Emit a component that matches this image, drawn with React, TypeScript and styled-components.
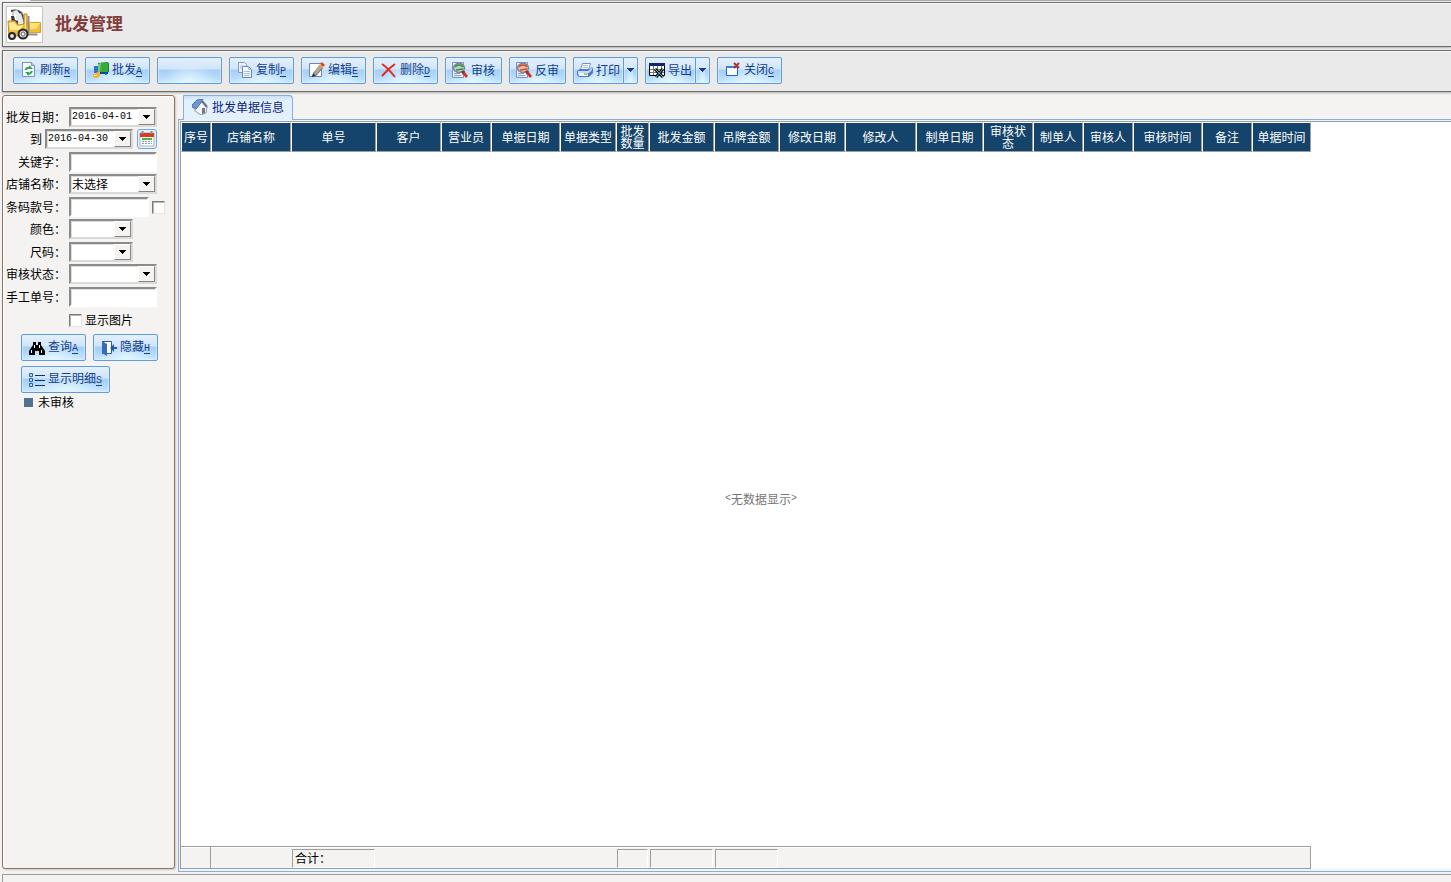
import React from 'react';
import styled, { createGlobalStyle, css } from 'styled-components';

const Global = createGlobalStyle`
  * { box-sizing: border-box; }
  body {
    margin: 0;
    background: #f4f3f1;
    color: #000;
    font: 12px/14px "Noto Sans CJK SC", sans-serif;
  }
  button, input, select { font: inherit; color: inherit; margin: 0; padding: 0; }
`;

const mono = '"Liberation Mono", monospace';

const Page = styled.div`
  display: flex;
  position: relative;
  flex-direction: column;
  min-height: 100vh;
  padding: 2px 0 0 2px;
  overflow: hidden;
  &::before {
    content: "";
    position: absolute;
    top: 0;
    left: 30px;
    right: 0;
    height: 1px;
    background: #a9a9a9;
  }
`;

const bar = css`
  border: 1px solid #6c6c6c;
  border-right: 0;
  background: #eaeaea;
  box-shadow: inset 1px 1px 0 #f8f8f8, 0 1px 2px #aaa;
`;

const Header = styled.header`
  ${bar}
  display: flex;
  align-items: center;
  gap: 12px;
  height: 45px;
  padding: 0 3px;
`;

const Logo = styled.span`
  display: flex;
  width: 37px;
  height: 37px;
  border: 1px solid #cdc3b8;
  background: #fff;
`;

const Title = styled.h1`
  margin: 0;
  padding-bottom: 3px;
  font: 700 17px/20px "Noto Sans CJK SC", sans-serif;
  color: #813c3b;
`;

const Toolbar = styled.nav`
  ${bar}
  display: flex;
  align-items: center;
  gap: 7px;
  height: 42px;
  margin-top: 3px;
  padding: 0 10px 2px;
`;

const face = css`
  background:
    radial-gradient(ellipse at 50% 100%, rgba(232, 250, 255, 0.9), rgba(232, 250, 255, 0) 60%),
    linear-gradient(#e4f1fe, #d0e4fa 42%, #a9cef6 50%, #b3d8fb 75%, #cdeaff);
  color: #123f8e;
  white-space: nowrap;
`;

const Button = styled.button<{ $w: number }>`
  ${face}
  display: flex;
  flex: none;
  align-items: center;
  justify-content: center;
  gap: 3px;
  width: ${(p) => p.$w}px;
  height: 27px;
  border: 1px solid #5f9be0;
  border-radius: 2px;
  box-shadow: inset 0 0 0 1px rgba(225, 242, 255, 0.6);
  u { font: 10px/14px ${mono}; text-underline-offset: 2px; }
`;

const Split = styled.div`
  display: flex;
  flex: none;
  ${Button}:first-child { border-right: 0; border-radius: 2px 0 0 2px; }
  ${Button}:last-child { border-radius: 0 2px 2px 0; }
`;

const Work = styled.main`
  display: flex;
  flex: 1;
  margin-top: 3px;
`;

const Sidebar = styled.aside`
  flex: none;
  width: 173px;
  margin-bottom: 3px;
  padding: 11px 3px 0;
  border: 1px solid #8f7565;
  border-radius: 3px;
  background: #f4f3f1;
  box-shadow: inset 1px 1px 0 #fff, 1px 1px 2px #cfc8bd;
`;

const Field = styled.div`
  display: flex;
  align-items: center;
  gap: 3px;
  height: 20px;
  margin-bottom: 2px;
  &:nth-child(even) { margin-bottom: 3px; }
`;

const Label = styled.label<{ $w?: number }>`
  flex: none;
  width: ${(p) => p.$w ?? 60}px;
  text-align: right;
  white-space: nowrap;
`;

const sunken = css`
  border: 2px solid;
  border-color: #8b8b8b #fff #fff #8b8b8b;
  background: #fff;
  box-shadow: inset 1px 1px 0 #ddd;
`;

const TextBox = styled.input<{ $w: number }>`
  ${sunken}
  width: ${(p) => p.$w}px;
  height: 20px;
  border-radius: 0;
  outline: 0;
`;

const Combo = styled.span<{ $w: number }>`
  ${sunken}
  display: flex;
  position: relative;
  flex: none;
  width: ${(p) => p.$w}px;
  height: 20px;
  border-right-color: #dcdad6;
  border-bottom-color: #dcdad6;
`;

const Select = styled.select<{ $mono?: boolean }>`
  appearance: none;
  width: 100%;
  padding-left: 1px;
  border: 0;
  outline: 0;
  background: transparent;
  ${(p) => p.$mono && css`font: 10px/14px ${mono};`}
`;

const Drop = styled.span`
  display: flex;
  position: absolute;
  top: 0;
  right: 0;
  bottom: 0;
  align-items: center;
  justify-content: center;
  width: 17px;
  border: 1px solid;
  border-color: #fff #858585 #858585 #fff;
  background: #f4f3f1;
  pointer-events: none;
`;

const Tick = styled.input`
  appearance: none;
  flex: none;
  width: 13px;
  height: 13px;
  border: 1px solid;
  border-color: #7c7c7c #e6e4e0 #e6e4e0 #7c7c7c;
  background: #fff;
  box-shadow: inset 1px 1px 0 #b5b5b5;
`;

const PhotoRow = styled.div`
  display: flex;
  align-items: center;
  gap: 3px;
  height: 22px;
  padding-left: 63px;
`;

const CalendarButton = styled.button`
  display: flex;
  width: 20px;
  height: 20px;
  margin-left: 1px;
  border: 1px solid #6fa8e4;
  border-radius: 3px;
  background: #e3f0fd;
`;

const Actions = styled.div`
  display: flex;
  flex-wrap: wrap;
  gap: 5px 7px;
  padding: 3px 0 0 15px;
`;

const Legend = styled.div`
  display: flex;
  align-items: center;
  gap: 5px;
  height: 18px;
  padding-left: 18px;
  &::before { content: ""; width: 9px; height: 9px; background: #50718f; }
`;

const Content = styled.section`
  display: flex;
  flex: 1;
  flex-direction: column;
  min-width: 0;
  padding-left: 3px;
`;

const Tabs = styled.div`
  display: flex;
  padding-left: 5px;
`;

const Tab = styled.button`
  display: flex;
  position: relative;
  align-items: center;
  gap: 4px;
  width: 110px;
  height: 25px;
  margin-bottom: -1px;
  padding: 0 0 3px 8px;
  border: 1px solid #86aee2;
  border-bottom: 0;
  border-radius: 1px 4px 0 0;
  background: linear-gradient(#c9e0fb, #e3f0fd 5px);
  color: #0b1f83;
  white-space: nowrap;
`;

const Frame = styled.div`
  display: flex;
  flex: 1;
  padding: 1px 0 2px 1px;
  border: 1px solid #86aee2;
  border-right: 0;
  background: #eef4fa;
`;

const Grid = styled.div`
  display: flex;
  flex: 1;
  flex-direction: column;
  min-width: 0;
  border-top: 1px solid #9d9d9b;
  border-left: 1px solid #9d9d9b;
  background: #fff;
`;

const Table = styled.table`
  width: 1130px;
  table-layout: fixed;
  border-collapse: separate;
  border-spacing: 0;
`;

const HeadCell = styled.th`
  height: 30px;
  padding: 0 1px;
  border: 1px solid;
  border-color: #fff #9d9d9b #9d9d9b #fff;
  background: #14446b;
  color: #fff;
  font-weight: 400;
  line-height: 12px;
`;

const Empty = styled.p`
  display: flex;
  flex: 1;
  align-items: center;
  justify-content: center;
  max-width: 1160px;
  margin: 0;
  color: #777;
`;

const Angle = styled.span`
  font: 10px/14px ${mono};
`;

const FootCell = styled.td<{ $line?: boolean }>`
  height: 23px;
  padding: 1px 1px 0;
  border-top: 1px solid #9d9d9b;
  border-bottom: 1px solid #9d9d9b;
  border-right: ${(p) => (p.$line ? '1px solid #9d9d9b' : '0')};
  background: #f4f3f1;
  box-shadow: inset 0 1px 0 #fff;
`;

const Sum = styled.div`
  height: 19px;
  padding: 1px 0 0 2px;
  border: 1px solid;
  border-color: #9d9d9b #fff #fff #9d9d9b;
  white-space: nowrap;
`;

const Status = styled.footer`
  height: 8px;
  margin-top: 2px;
  border-top: 1px solid #9d9d9b;
  border-left: 1px solid #9d9d9b;
`;

const Svg = styled.svg`
  flex: none;
  display: block;
`;

const Icon = ({ children, size = 16 }: { children: React.ReactNode; size?: number }) => (
  <Svg width={size} height={size} viewBox={`0 0 ${size} ${size}`} aria-hidden="true">{children}</Svg>
);

const Arrow = ({ color = '#000' }: { color?: string }) => (
  <Svg width="7" height="4" viewBox="0 0 7 4" shapeRendering="crispEdges" aria-hidden="true">
    <path d="M0 0h7v1h-1v1h-1v1h-1v1h-1v-1h-1v-1h-1v-1h-1z" fill={color} />
  </Svg>
);

const Forklift = () => (
  <Icon size={35}>
    <path d="M6 5h9l7 14H6z" fill="#fff" stroke="#9a9da2" />
    <path d="M4 3q9-2 12 5l3 11h-2L13 8 9 4 4 5z" fill="#30343d" />
    <path d="m9 9 5-3 3 10-7 1zM6 4l4-1 3 4-5 1z" fill="#e5e9ec" />
    <path d="M4 9h3l1 4 3 1v4H5z" fill="#3c3834" />
    <path d="M1 14h7l3 4 6-1V7h3v22H2z" fill="#f1c13c" stroke="#c08d2a" />
    <path d="m2 16 5-1 3 4 6-1-3 5H3z" fill="#ffec94" />
    <path d="M18 8h1v19h-1z" fill="#ffe68b" />
    <path d="M21.500 9v18.500h9" fill="none" stroke="#8a8ca0" strokeWidth="2" />
    <path d="M22.500 15.500h11v10h-11z" fill="#f1be38" stroke="#d99f25" />
    <path d="M23 16h10l-4 6h-6z" fill="#ffe179" />
    <circle cx="5" cy="29" r="3" fill="#dedede" stroke="#252525" strokeWidth="2" />
    <circle cx="16" cy="27" r="4.500" fill="#d7d7d7" stroke="#252525" strokeWidth="2" />
    <circle cx="16" cy="27" r="2" fill="#fff" stroke="#666" />
  </Icon>
);

const RefreshIcon = () => (
  <Icon>
    <path d="M1.500.5h9l3 3v11h-12z" fill="#f5faff" stroke="#7895c4" />
    <path d="M10.500.5v3h3" fill="#b9cdec" stroke="#7895c4" />
    <path d="M4.500 8q1-3 5-2M11 9q-1 3-5 3" fill="none" stroke="#35a64c" strokeWidth="2" />
    <path d="m8 3 4 4H8zM8 14l-4-4h4z" fill="#35a64c" />
  </Icon>
);
const TruckIcon = () => (
  <Icon>
    <path d="m5 1 10-1 1 2v8l-2 1-9-1z" fill="#17821f" />
    <path d="M7 1h8v9H7z" fill="#35ad38" /><path d="m5 2 3-1-1 9H4z" fill="#76c975" />
    <path d="M1 4h4v7H1z" fill="#3b6fc6" /><path d="M5 10h10v2H5z" fill="#173f9a" />
    <circle cx="13" cy="12" r="1" fill="#235dc1" />
    <path d="M0 12h3l1-2h3v4l-3 2H1l-1-2z" fill="#efb42a" /><path d="M1 13h3v1H1z" fill="#ffe582" />
  </Icon>
);
const CopyIcon = () => (
  <Icon>
    <path d="M1.500.5h6l2 2v8h-8z" fill="#eaf3ff" stroke="#809bc7" />
    <path d="M5.500 4.500h6l3 3v8h-9z" fill="#f4f9ff" stroke="#6884b8" />
    <path d="M11.500 4.500v3h3M3 4h4M3 6h2M7 9.500h6M7 11.500h6M7 13.500h6" fill="none" stroke="#a5bde0" />
  </Icon>
);
const EditIcon = () => (
  <Icon>
    <path d="M.5 1.500h12v13H.5z" fill="#fafdff" stroke="#6f87ae" />
    <path d="m11 3 3 3-7 8-4 1 1-4z" fill="#5d697c" /><path d="m10 3 3 3-6 7-2-2z" fill="#b5a78e" />
    <path d="m11 2 2-2 3 3-2 2z" fill="#da422c" /><path d="m3 15 1-3 2 2z" fill="#222" />
    <path d="m10 3 1-1 3 3-1 1z" fill="#f6b42c" />
  </Icon>
);
const DeleteIcon = () => (
  <Icon>
    <path d="M1 2q5 3 13 13M14 2Q7 7 1 14" fill="none" stroke="#e22a1d" strokeWidth="2" />
  </Icon>
);
const AuditIcon = ({ red }: { red?: boolean }) => (
  <Icon>
    <path d="M.5.5h11v15H.5z" fill="#e5eefb" stroke="#7791bd" />
    <path d="M2 11.500h6M2 13.500h7" stroke="#8ca2c8" />
    <ellipse cx="7" cy="6" rx="5.500" ry="4.500" fill={red ? '#edc0a5' : '#c4d2cc'} stroke="#7a8793" strokeWidth="1.500" />
    <path d="M3 5q4-4 8 0M4 8l7-1" stroke={red ? '#dc4635' : '#29953d'} strokeWidth="1.500" fill="none" />
    <path d="m9 10 3-1 4 5-2 2z" fill="#d6301d" /><path d="m9 9 4 0-2 4z" fill="#8c392d" />
  </Icon>
);
const PrintIcon = () => (
  <Icon>
    <path d="M5.500 1.500h8l-2 6h-8z" fill="#fff" stroke="#6e92cc" />
    <path d="M6 3.500h5M6 5.500h5" stroke="#9eb7de" />
    <path d="m0 9 3-2h10l2-2 1 2v4l-4 4H2l-2-2z" fill="#4d7ac6" />
    <path d="M1 9h10l4-3v2l-3 3H1z" fill="#c4dbf8" /><path d="M1 11h10v3H2z" fill="#eef6ff" />
    <path d="M7 11.500h2v1H7z" fill="#33a54a" /><path d="M9 11.500h2v1H9z" fill="#ef7d33" />
  </Icon>
);
const ExportIcon = () => (
  <Icon>
    <path d="M.5 1.500h15v12H.5z" fill="#fff" stroke="#000" /><path d="M0 1h16v3H0z" fill="#11256f" />
    <path d="M1 7.500h14M1 10.500h14M4.500 4v9M8.500 4v9M12.500 4v9" stroke="#777" />
    <path d="m6 7 8 8M14 7l-7 8" stroke="#000" strokeWidth="3" /><path d="m6 7 8 8M14 7l-7 8" stroke="#4fd0df" />
  </Icon>
);
const CloseIcon = () => (
  <Icon>
    <path d="M1.500 4.500h11v9h-11z" fill="#f9fcff" stroke="#1d67d0" /><path d="M1 4h12v2H1z" fill="#3c82dc" />
    <path d="m9 1 5 5M14 1 9 6" stroke="#b5302b" strokeWidth="2" />
  </Icon>
);
const FindIcon = () => (
  <Icon>
    <path d="M4 2h3v3h2V2h3v3l4 6v4h-6v-4H6v4H0v-4l4-6z" fill="#000" />
    <path d="M2.500 10v3M5.500 5v3M10.500 5v3M12.500 10v3" stroke="#fff" />
  </Icon>
);
const HideIcon = () => (
  <Icon>
    <path d="M1.500 1.500h9v12h-9z" fill="#fff" stroke="#275ca8" />
    <path d="m1 1 5 3v12l-5-3z" fill="#346db9" />
    <path d="m9 8 4-4v3h3v2h-3v3z" fill="#225bad" />
  </Icon>
);
const ListIcon = () => (
  <Icon>
    <path d="M6 3.500h10M6 8.500h10M6 13.500h10" stroke="#14315f" />
    <path d="M.5 1.500h3v3h-3zM.5 6.500h3v3h-3zM.5 11.500h3v3h-3z" fill="#b7e2bf" stroke="#2561a5" />
  </Icon>
);
const CalendarIcon = () => (
  <Icon size={18}>
    <path d="M2 3h14v13H2z" fill="#fff" stroke="#abb3bc" /><path d="M2 3h14v4H2z" fill="#db3b24" />
    <path d="M4.500 1v3M13.500 1v3" stroke="#8b8b8b" strokeWidth="2" />
    <path d="M4 8h10v2H4z" fill="#55ad46" /><path d="M4 11.500h10M4 13.500h10" stroke="#8297ad" strokeDasharray="2 1" />
  </Icon>
);
const HomeIcon = () => (
  <Icon>
    <path d="m3 8 7-5 5 5-1 6-5 2-6-4z" fill="#f2f3f5" stroke="#9a9ca0" />
    <path d="m0 6 5-5 6-1-3 5-4 5-4-2z" fill="#6d98cf" stroke="#5376a4" />
    <path d="m10 2 5 6" stroke="#68707e" strokeWidth="2" /><path d="M10 9h3v5l-3 1z" fill="#737984" />
  </Icon>
);

const Tool = ({ w = 65, icon, text, k }: { w?: number; icon?: React.ReactNode; text?: string; k?: string }) => (
  <Button type="button" $w={w} aria-label={text ? undefined : '空白'}>
    {icon}
    {text && <span>{text}{k && <u>{k}</u>}</span>}
  </Button>
);

const SplitTool = ({ icon, text }: { icon: React.ReactNode; text: string }) => (
  <Split>
    <Tool w={50} icon={icon} text={text} />
    <Button type="button" $w={15} aria-label={`${text}选项`}><Arrow color="#123f8e" /></Button>
  </Split>
);

const ComboBox = ({ id, w, value = '', mono: fixed }: { id: string; w: number; value?: string; mono?: boolean }) => (
  <Combo $w={w}>
    <Select id={id} $mono={fixed} defaultValue={value}><option value={value}>{value}</option></Select>
    <Drop><Arrow /></Drop>
  </Combo>
);

const columns: [string, number][] = [
  ['序号', 30], ['店铺名称', 80], ['单号', 85], ['客户', 65], ['营业员', 50],
  ['单据日期', 69], ['单据类型', 56], ['批发数量', 33], ['批发金额', 65], ['吊牌金额', 65],
  ['修改日期', 66], ['修改人', 71], ['制单日期', 67], ['审核状态', 50], ['制单人', 50],
  ['审核人', 50], ['审核时间', 69], ['备注', 50], ['单据时间', 59],
];
const totals: Record<string, string> = { 单号: '合计：', 批发数量: '', 批发金额: '', 吊牌金额: '' };

const Cols = () => <colgroup>{columns.map(([name, w]) => <col key={name} width={w} />)}</colgroup>;

export default function App() {
  return (
    <Page>
      <Global />
      <Header><Logo><Forklift /></Logo><Title>批发管理</Title></Header>
      <Toolbar>
        <Tool icon={<RefreshIcon />} text="刷新" k="R" />
        <Tool icon={<TruckIcon />} text="批发" k="A" />
        <Tool />
        <Tool icon={<CopyIcon />} text="复制" k="P" />
        <Tool icon={<EditIcon />} text="编辑" k="E" />
        <Tool icon={<DeleteIcon />} text="删除" k="D" />
        <Tool w={57} icon={<AuditIcon />} text="审核" />
        <Tool w={57} icon={<AuditIcon red />} text="反审" />
        <SplitTool icon={<PrintIcon />} text="打印" />
        <SplitTool icon={<ExportIcon />} text="导出" />
        <Tool icon={<CloseIcon />} text="关闭" k="C" />
      </Toolbar>
      <Work>
        <Sidebar>
          <Field><Label htmlFor="from">批发日期：</Label><ComboBox id="from" w={88} value="2016-04-01" mono /></Field>
          <Field>
            <Label htmlFor="to" $w={36}>到</Label><ComboBox id="to" w={88} value="2016-04-30" mono />
            <CalendarButton type="button" aria-label="日历"><CalendarIcon /></CalendarButton>
          </Field>
          <Field><Label htmlFor="keyword">关键字：</Label><TextBox id="keyword" $w={88} /></Field>
          <Field><Label htmlFor="shop">店铺名称：</Label><ComboBox id="shop" w={88} value="未选择" /></Field>
          <Field>
            <Label htmlFor="code">条码款号：</Label><TextBox id="code" $w={80} />
            <Tick type="checkbox" aria-label="条码款号" />
          </Field>
          <Field><Label htmlFor="color">颜色：</Label><ComboBox id="color" w={64} /></Field>
          <Field><Label htmlFor="size">尺码：</Label><ComboBox id="size" w={64} /></Field>
          <Field><Label htmlFor="state">审核状态：</Label><ComboBox id="state" w={88} /></Field>
          <Field><Label htmlFor="manual">手工单号：</Label><TextBox id="manual" $w={88} /></Field>
          <PhotoRow><Tick type="checkbox" id="photo" /><label htmlFor="photo">显示图片</label></PhotoRow>
          <Actions>
            <Tool icon={<FindIcon />} text="查询" k="A" />
            <Tool icon={<HideIcon />} text="隐藏" k="H" />
            <Tool w={89} icon={<ListIcon />} text="显示明细" k="S" />
          </Actions>
          <Legend>未审核</Legend>
        </Sidebar>
        <Content>
          <Tabs><Tab type="button"><HomeIcon />批发单据信息</Tab></Tabs>
          <Frame>
            <Grid>
              <Table>
                <Cols />
                <thead><tr>{columns.map(([name]) => <HeadCell key={name} scope="col">{name}</HeadCell>)}</tr></thead>
              </Table>
              <Empty><Angle>&lt;</Angle>无数据显示<Angle>&gt;</Angle></Empty>
              <Table>
                <Cols />
                <tbody>
                  <tr>
                    {columns.map(([name], i) => (
                      <FootCell key={name} $line={i === 0 || i === columns.length - 1}>
                        {name in totals && <Sum>{totals[name]}</Sum>}
                      </FootCell>
                    ))}
                  </tr>
                </tbody>
              </Table>
            </Grid>
          </Frame>
        </Content>
      </Work>
      <Status />
    </Page>
  );
}
